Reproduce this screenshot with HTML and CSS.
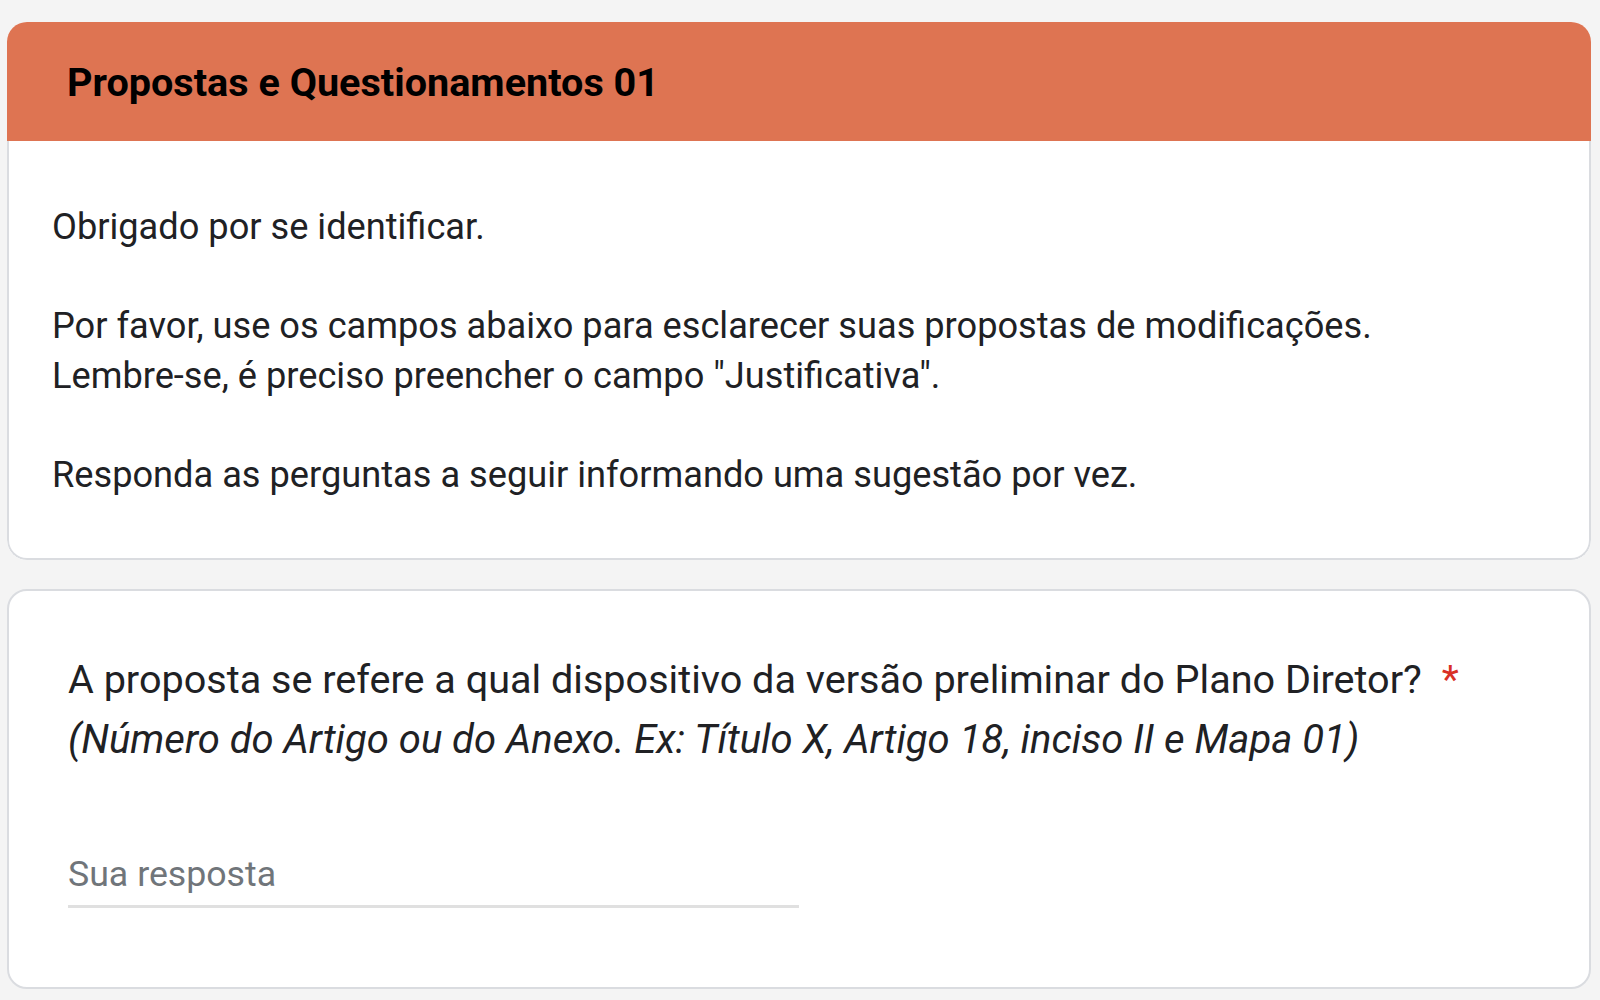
FILE: index.html
```html
<!DOCTYPE html>
<html lang="pt-BR">
<head>
  <meta charset="UTF-8">
  <title>Propostas e Questionamentos 01</title>
  <link rel="stylesheet" href="styles.css">
</head>
<body>
  <div class="page">
    <div class="section-card">
      <div class="section-header">Propostas e Questionamentos 01</div>
      <div class="section-body">
        Obrigado por se identificar.<br>
        <br>
        Por favor, use os campos abaixo para esclarecer suas propostas de modificações.<br>
        Lembre-se, é preciso preencher o campo "Justificativa".<br>
        <br>
        Responda as perguntas a seguir informando uma sugestão por vez.
      </div>
    </div>

    <div class="question-card">
      <div class="question-title">
        A proposta se refere a qual dispositivo da versão preliminar do Plano Diretor?<span class="required">*</span><br>
        <em>(Número do Artigo ou do Anexo. Ex: Título X, Artigo 18, inciso II e Mapa 01)</em>
      </div>
      <div class="answer">Sua resposta</div>
    </div>
  </div>
</body>
</html>
```

FILE: styles.css
```css
body { margin: 0; background-color: #f4f4f4; font-family: Roboto, "Liberation Sans", Arial, sans-serif; color: #202124; }
.page { display: flex; flex-direction: column; gap: 29px; width: 1584px; margin-left: 7px; padding-top: 22px; }

.section-card { background: white; border-radius: 20px; overflow: hidden; }
.section-header { background-color: #de7452; color: #000; font-size: 39.6px; font-weight: 700; line-height: 56px; padding: 33px 60px 30px; }
.section-body { border: 2px solid #dadce0; border-top: none; border-radius: 0 0 20px 20px; padding: 61px 43px 59px; font-size: 36.2px; line-height: 49.5px; }

.question-card { background: white; border: 2px solid #dadce0; border-radius: 20px; padding: 59px 59px 79px; }
.question-title { font-size: 39.6px; line-height: 60px; }
.question-title em { font-style: italic; font-size: 40px; }
.required { color: #d93025; margin-left: 20px; }
.answer { width: 731px; margin-top: 79px; padding-bottom: 6px; border-bottom: 3px solid #e0e0e0; font-size: 35.7px; line-height: 50px; color: #70757a; }
```
